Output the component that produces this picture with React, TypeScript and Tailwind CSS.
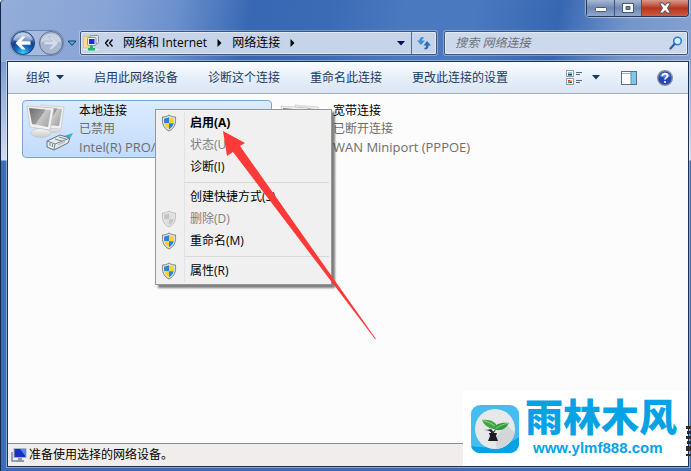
import type { ReactNode } from "react";

const commands = ["启用此网络设备", "诊断这个连接", "重命名此连接", "更改此连接的设置"];

type MenuEntry = {
  label: string;
  shield?: "color" | "gray";
  disabled?: boolean;
  bold?: boolean;
};

const menuGroups: MenuEntry[][] = [
  [
    { label: "启用(A)", shield: "color", bold: true },
    { label: "状态(U)", disabled: true },
    { label: "诊断(I)" },
  ],
  [
    { label: "创建快捷方式(S)" },
    { label: "删除(D)", shield: "gray", disabled: true },
    { label: "重命名(M)", shield: "color" },
  ],
  [{ label: "属性(R)", shield: "color" }],
];

function Shield({ gray }: { gray?: boolean }) {
  const blue = gray ? "#c4c4c4" : "#2b83d6";
  const yellow = gray ? "#dedede" : "#fbd32b";
  return (
    <svg width="16" height="18" viewBox="0 0 16 18" aria-hidden="true">
      <path
        d="M8 1C6 2.500 3.500 3 1.500 3C1 9 2 14 8 17C14 14 15 9 14.500 3C12.500 3 10 2.500 8 1Z"
        fill={gray ? "#e6e6e6" : "#dfe3e6"}
        stroke={gray ? "#bdbdbd" : "#7f8589"}
      />
      <path d="M8 3C6.500 4 5 4.400 3.200 4.500C3 6.500 3 8 3.400 9.200H8Z" fill={blue} />
      <path d="M8 3C9.500 4 11 4.400 12.800 4.500C13 6.500 13 8 12.600 9.200H8Z" fill={yellow} />
      <path d="M3.400 9.200C4 12 5.500 13.800 8 15.200V9.200Z" fill={yellow} />
      <path d="M12.600 9.200C12 12 10.500 13.800 8 15.200V9.200Z" fill={blue} />
    </svg>
  );
}

function NetworkPcIcon({ plug }: { plug?: boolean }) {
  return (
    <svg width="48" height="50" viewBox="0 0 48 50" className="overflow-visible" aria-hidden="true">
      <defs>
        <linearGradient id="screen" x1="0" y1="0.2" x2="1" y2="0.8">
          <stop offset="0" stopColor="#747474" />
          <stop offset="0.5" stopColor="#9b9b9b" />
          <stop offset="0.52" stopColor="#c9c9c9" />
          <stop offset="1" stopColor="#a2a2a2" />
        </linearGradient>
        <linearGradient id="stand" x1="0" y1="0" x2="0" y2="1">
          <stop offset="0" stopColor="#f4f4f4" />
          <stop offset="1" stopColor="#c9c9c9" />
        </linearGradient>
      </defs>
      <ellipse cx="31" cy="28" rx="8" ry="3" fill="url(#stand)" />
      <path d="M18 3L41 5L38 27L20 26Z" fill="#efefef" stroke="#bdbdbd" strokeWidth="0.6" />
      <path d="M20 5L39 7L36 24L22 23Z" fill="url(#screen)" />
      <path d="M15 25H23L22 30H15Z" fill="#cfcfcf" />
      <ellipse cx="18" cy="31" rx="10" ry="4.500" fill="url(#stand)" stroke="#c4c4c4" strokeWidth="0.6" />
      <path d="M4 4L31 6L27 28L7 25Z" fill="#f2f2f2" stroke="#b8b8b8" strokeWidth="0.6" />
      <path d="M6 6L28 8L25 25L9 22Z" fill="url(#screen)" />
      {plug && (
        <g>
          <path d="M38 35L50 31L48 35L42 38Z" fill="#35b2e0" />
          <path d="M24 39L37 33L47 36L45 41L31 48L24 45Z" fill="#e6ebf0" stroke="#68727a" />
          <path d="M24 39L32 42L47 36M32 42L31 48M27 41V44M29.500 42V45M32 37L39 39M36 35L43 37" fill="none" stroke="#7b858d" />
          <path d="M35 43L42 39.500" stroke="#b9c3cc" strokeWidth="1.500" />
        </g>
      )}
    </svg>
  );
}

function Connection(props: { name: string; state: string; device: string; selected?: boolean }) {
  return (
    <button
      type="button"
      className={`flex h-[58px] w-[250px] items-start gap-2 rounded-sm border pt-px text-left leading-[18px] ${
        props.selected
          ? "border-[#7da2ce] bg-linear-to-b from-[#dcebfd] to-[#c1dcfc]"
          : "border-transparent"
      }`}
    >
      <span className="shrink-0">
        <NetworkPcIcon plug={props.selected} />
      </span>
      <span className="min-w-0 whitespace-nowrap text-[#6d6d6d]">
        <span className="block text-black">{props.name}</span>
        <span className="block">{props.state}</span>
        <span className="block text-[13px]">{props.device}</span>
      </span>
    </button>
  );
}

function ContextMenu() {
  return (
    <ul
      role="menu"
      className="absolute top-[15px] left-[147px] w-[177px] border border-[#979797] bg-[#f0f0f0] p-0.5 shadow-[3px_3px_2px_rgba(0,0,0,0.5)]"
    >
      {menuGroups.map((group, index) => (
        <li key={group[0].label} role="none">
          {index > 0 && (
            <div className="flex h-2 items-center">
              <span className="h-2 w-[27px] border-r border-[#e2e3e3]" />
              <hr className="flex-1 border-[#d8d8d8]" />
            </div>
          )}
          <ul role="none">
            {group.map((entry) => (
              <li key={entry.label} role="none">
                <button
                  type="button"
                  role="menuitem"
                  disabled={entry.disabled}
                  className={`flex h-[22px] w-full items-center text-left ${
                    entry.disabled ? "text-[#808080]" : "text-black"
                  } ${entry.bold ? "font-bold" : ""}`}
                >
                  <span className="flex h-full w-[27px] items-center justify-center border-r border-[#e2e3e3] pr-1">
                    {entry.shield && <Shield gray={entry.shield === "gray"} />}
                  </span>
                  <span className="pl-[5px]">{entry.label}</span>
                </button>
              </li>
            ))}
          </ul>
        </li>
      ))}
    </ul>
  );
}

function CaptionButton(props: { label: string; className: string; children: ReactNode }) {
  return (
    <button
      type="button"
      aria-label={props.label}
      className={`flex h-4 items-center justify-center ${props.className}`}
    >
      {props.children}
    </button>
  );
}

function TitleBar() {
  return (
    <div className="flex h-[31px] justify-end">
      <div className="flex h-[17px] rounded-b border border-t-0 border-[#26395c] shadow-[0_0_1px_1px_rgba(255,255,255,0.45)]">
        <CaptionButton label="最小化" className="w-7 border-r border-[#3c5078] bg-linear-to-b from-[#a9b9d3] via-[#6e88b2] to-[#8ea8cd]">
          <svg width="14" height="8" viewBox="0 0 14 8" className="mt-1">
            <rect x="1.500" y="1.500" width="11" height="4" rx="1" fill="#fff" stroke="#4a5870" />
          </svg>
        </CaptionButton>
        <CaptionButton label="最大化" className="w-[27px] border-r border-[#3c5078] bg-linear-to-b from-[#a9b9d3] via-[#6e88b2] to-[#8ea8cd]">
          <svg width="14" height="12" viewBox="0 0 14 12">
            <path fillRule="evenodd" d="M1.500 1.500H12.500V10.500H1.500ZM5 4.500V7.500H9V4.500Z" fill="#fff" stroke="#4a5870" />
          </svg>
        </CaptionButton>
        <CaptionButton label="关闭" className="w-[46px] rounded-br bg-linear-to-b from-[#d79a8c] via-[#b5331f] to-[#cf5b40]">
          <svg width="14" height="12" viewBox="0 0 14 12">
            <path
              d="M1.500 1H5L7 3.500L9 1H12.500L9.500 6L12.500 11H9L7 8.500L5 11H1.500L4.500 6Z"
              fill="#fff"
              stroke="#53525c"
            />
          </svg>
        </CaptionButton>
      </div>
    </div>
  );
}

function NavButtons() {
  return (
    <div className="flex items-center">
      <div className="flex gap-1 rounded-full bg-white/20 shadow-[0_0_1px_1px_rgba(40,60,100,0.35)]">
        <button type="button" aria-label="后退">
          <svg width="24" height="24" viewBox="0 0 24 24" className="block">
            <defs>
              <radialGradient id="back" cx="0.5" cy="0.95" r="0.85">
                <stop offset="0" stopColor="#3fd4fb" />
                <stop offset="0.4" stopColor="#1268c0" />
                <stop offset="0.7" stopColor="#123f90" />
                <stop offset="1" stopColor="#9bb5dc" />
              </radialGradient>
            </defs>
            <circle cx="12" cy="12" r="11.500" fill="url(#back)" stroke="#20406f" />
            <path d="M2.500 9C5 0 19 0 21.500 9C16 11 8 11 2.500 9Z" fill="#fff" opacity="0.45" />
            <path d="M4.500 12L11 5.500H14.500L10.500 10.200H19.500V13.800H10.500L14.500 18.500H11Z" fill="#fff" />
          </svg>
        </button>
        <button type="button" aria-label="前进">
          <svg width="24" height="24" viewBox="0 0 24 24" className="block">
            <circle cx="12" cy="12" r="11.500" fill="#a9b7cf" stroke="#5c6f92" />
            <path d="M2 11C3 0 21 0 22 11Z" fill="#fff" opacity="0.4" />
            <path d="M19.500 12L13 5.500H9.500L13.500 10.200H5V13.800H13.500L9.500 18.500H13Z" fill="#d3dcea" stroke="#a3b0c8" strokeWidth="0.6" />
          </svg>
        </button>
      </div>
      <button type="button" aria-label="最近的页面" className="ml-1 flex w-2.5 justify-center">
        <svg width="10" height="7" viewBox="0 0 10 7">
          <path d="M1 1H9L5 5.500Z" fill="#3fb0dc" stroke="#1d3d70" />
        </svg>
      </button>
    </div>
  );
}

function CrumbArrow() {
  return (
    <svg width="5" height="8" viewBox="0 0 5 8" aria-hidden="true">
      <path d="M0.500 0V8L4.500 4Z" fill="#000" />
    </svg>
  );
}

function AddressBar() {
  return (
    <div className="flex h-6 flex-1 items-center rounded-xs border border-[#3f557e] bg-[#c6d4ea] shadow-[inset_0_0_0_1px_rgba(255,255,255,0.5),0_0_0_1px_rgba(255,255,255,0.3)]">
      <svg width="16" height="16" viewBox="0 0 16 16" className="ml-0.5 shrink-0" aria-hidden="true">
        <path d="M0.500 1.500H5L7 0.500V13H0.500Z" fill="#f6df84" stroke="#d6b95a" strokeWidth="0.7" />
        <rect x="7" y="0.500" width="8.500" height="8" rx="1" fill="#dfe3ec" stroke="#8994ab" />
        <rect x="4.500" y="2.500" width="8.500" height="8" rx="1" fill="#e9ecf4" stroke="#8994ab" />
        <rect x="6" y="4" width="5.500" height="5" fill="#1a2fd0" />
        <path d="M0 14.500H16" stroke="#dfe6e8" strokeWidth="2" />
        <path d="M7 11H10V13H12V15.500H5V13H7Z" fill="#21b573" />
      </svg>
      <nav aria-label="地址" className="flex flex-1 items-center gap-2.5 pl-1.5 whitespace-nowrap">
        <svg width="8" height="8" viewBox="0 0 8 8" aria-hidden="true">
          <path d="M3.500 0.500L0.500 4L3.500 7.500M7.500 0.500L4.500 4L7.500 7.500" fill="none" stroke="#000" strokeWidth="1.300" />
        </svg>
        <a href="#network">网络和 Internet</a>
        <CrumbArrow />
        <a href="#connections">网络连接</a>
        <CrumbArrow />
      </nav>
      <button type="button" aria-label="以前的位置" className="flex h-full w-5 items-center justify-center">
        <svg width="8" height="5" viewBox="0 0 8 5">
          <path d="M0 0H8L4 4.500Z" fill="#0a0a5c" />
        </svg>
      </button>
      <button
        type="button"
        aria-label="刷新"
        className="flex h-full w-[25px] items-center justify-center border-l border-[#566a90]"
      >
        <svg width="16" height="14" viewBox="0 0 16 14">
          <path d="M7 1C4.500 1 3.500 2 3.500 4.500H1L5 9L9 4.500H6C6 3 6.500 2.500 8 2Z" fill="#3b8fd2" />
          <path d="M9 13.500C11.500 13.500 12.500 12 12.500 9.500H15L11 5L7.500 9.500H10C10 11 9.500 12 8 12.500Z" fill="#2a6cb4" />
        </svg>
      </button>
    </div>
  );
}

function SearchBox() {
  return (
    <label className="ml-1 flex h-6 w-[36%] items-center rounded-xs border border-[#3f557e] bg-[#ccd9ed] pr-1 pl-2.5 shadow-[inset_0_0_0_1px_rgba(255,255,255,0.5),0_0_0_1px_rgba(255,255,255,0.3)]">
      <input
        type="search"
        aria-label="搜索 网络连接"
        placeholder="搜索 网络连接"
        className="min-w-0 flex-1 bg-transparent italic outline-none placeholder:text-[#6c7178]"
      />
      <svg width="14" height="14" viewBox="0 0 14 14" aria-hidden="true">
        <circle cx="8.500" cy="5" r="3.800" fill="#d9ecfa" stroke="#2d82cb" strokeWidth="1.600" />
        <path d="M5.500 8L1.500 12.500" stroke="#2e5fa8" strokeWidth="2.200" strokeLinecap="round" />
      </svg>
    </label>
  );
}

function Toolbar() {
  return (
    <div className="flex h-8 items-center border-b border-[#a0afc3] bg-linear-to-b from-[#fbfdff] via-[#e6effa] to-[#dbe6f4] pr-[15px] pl-[18px] whitespace-nowrap text-[#1e395b]">
      <button type="button" className="mr-[30px] flex items-center gap-1.5">
        组织
        <svg width="8" height="5" viewBox="0 0 8 5" aria-hidden="true">
          <path d="M0 0H8L4 4.500Z" fill="#1e395b" />
        </svg>
      </button>
      <div className="flex flex-1 gap-[30px]">
        {commands.map((command) => (
          <button key={command} type="button">
            {command}
          </button>
        ))}
      </div>
      <button type="button" aria-label="更改您的视图" className="flex items-center gap-2.5">
        <svg width="16" height="16" viewBox="0 0 16 16">
          <rect x="0.500" y="0.500" width="7" height="6" fill="#fff" stroke="#8b9bac" />
          <path d="M2 4H6V5.500H2Z" fill="#173a52" />
          <path d="M2 2H6V4H2Z" fill="#7cc7dd" />
          <rect x="0.500" y="8.500" width="7" height="6" fill="#fff" stroke="#8b9bac" />
          <path d="M2 10H4V11.500H2Z" fill="#d43b2a" />
          <path d="M4 10H6V11.500H4Z" fill="#e9b72d" />
          <path d="M2 11.500H4V13H2Z" fill="#2c9a45" />
          <path d="M4 11.500H6V13H4Z" fill="#2750c4" />
          <path d="M10 2.500H16M10 4.500H14M10 10.500H16M10 12.500H14" stroke="#526a83" />
        </svg>
        <svg width="8" height="5" viewBox="0 0 8 5">
          <path d="M0 0H8L4 4.500Z" fill="#1e395b" />
        </svg>
      </button>
      <button type="button" aria-label="显示预览窗格" className="ml-[21px]">
        <svg width="16" height="14" viewBox="0 0 16 14" className="block">
          <rect x="0.500" y="0.500" width="15" height="13" fill="#fff" stroke="#5a7087" />
          <path d="M1 2.500H10" stroke="#9fb0c2" />
          <rect x="10" y="1" width="5" height="12" fill="#7fc8e8" />
          <path d="M10 1V13" stroke="#5a8fae" />
        </svg>
      </button>
      <button type="button" aria-label="获取帮助" className="ml-5">
        <svg width="16" height="16" viewBox="0 0 16 16" className="block">
          <circle cx="8" cy="8" r="7.300" fill="#2347b5" stroke="#8a8f9c" strokeWidth="1.400" />
          <path d="M2.500 6C4 1.500 12 1.500 13.500 6C10 8 6 8 2.500 6Z" fill="#8fb0ee" opacity="0.6" />
          <path d="M5.500 6C5.500 3 10.500 3 10.500 6C10.500 7.500 8 7.800 8 9.500" fill="none" stroke="#fff" strokeWidth="1.800" />
          <circle cx="8" cy="12" r="1.100" fill="#fff" />
        </svg>
      </button>
    </div>
  );
}

function SiteBadge() {
  return (
    <div className="absolute right-0 bottom-0 flex h-[75px] w-[225px] items-center gap-1.5 bg-white pl-2">
      <svg width="48" height="48" viewBox="0 0 48 48" className="shrink-0" aria-hidden="true">
        <rect width="48" height="48" rx="9" fill="#45bdef" />
        <path d="M0 41Q28 46 48 32V39A9 9 0 0 1 39 48H9A9 9 0 0 1 0 41Z" fill="#05a3e4" />
        <circle cx="24" cy="24" r="20" fill="#e6e8ea" />
        <path d="M26 43.900A20 20 0 0 0 43.500 28L35 19L24 34Z" fill="#d3d5d7" />
        <path d="M11 15C19 14 26 17 27 24C20 25 13 21 11 15Z" fill="#43a545" />
        <path d="M12 15.500C18 17 22 19 26 23" fill="none" stroke="#a7dc9c" strokeWidth="0.800" />
        <path d="M38 18C29 17 23 20 23 24C29 27 35 24 38 18Z" fill="#2f9a3e" />
        <path d="M37 18.500C32 19 28 21 24 24" fill="none" stroke="#a7dc9c" strokeWidth="0.800" />
        <path d="M13 25Q20 25 20.500 29H23Q23 25 25 23L24 27Q21 26 20 24Q17 25 13 25Z" fill="#26282b" />
        <path d="M18 28H26L25 31L27 36H17L19 31Z" fill="#1b1d22" />
      </svg>
      <div className="flex flex-col gap-1.5 pb-1 whitespace-nowrap text-[#05a3e4]">
        <div className="text-[38px] leading-9 font-black">雨林木风</div>
        <div className="pl-2 font-['Liberation_Sans',sans-serif] text-[15px] leading-4 font-bold">www.ylmf888.com</div>
      </div>
    </div>
  );
}

export default function App() {
  return (
    <main className="relative flex min-h-screen flex-col overflow-hidden rounded-tl border-l border-[#14264a] pr-0.5 pb-1 pl-1.5 font-['Open_Sans','Noto_Sans_CJK_SC',sans-serif] text-[12px] text-black [background:linear-gradient(180deg,#7f9ccf_0,#d3ddee_98px,#3d6cb7_99px,#3d6cb7_100%)_0_62px/100%_100%_no-repeat,linear-gradient(100deg,#94add9_0%,#88a4d6_15%,#6c91cd_25%,#3868b3_36%,#3b6bb5_47%,#4b79c0_58%,#4b79c0_68%,#3767b2_80%,#7495cb_90%,#85a1d0_100%)_0_0/100%_62px_no-repeat,#3d6cb7]">
      <TitleBar />
      <div className="mb-1.5 flex h-6 items-center gap-[3px] pr-px pl-1">
        <NavButtons />
        <AddressBar />
        <SearchBox />
      </div>
      <div className="relative flex flex-1 flex-col border border-[#1d3156] bg-[#fcfcfc] shadow-[0_0_0_1px_rgba(255,255,255,0.4)]">
        <Toolbar />
        <section className="relative flex flex-1 gap-1 pt-1.5 pl-3.5">
          <Connection name="本地连接" state="已禁用" device="Intel(R) PRO/" selected />
          <Connection name="宽带连接" state="已断开连接" device="WAN Miniport (PPPOE)" />
          <ContextMenu />
        </section>
        <footer className="flex h-[23px] items-center gap-0.5 border-t border-[#8d8d8d] bg-[#f1edec] pl-[3px]">
          <svg width="16" height="16" viewBox="0 0 16 16" aria-hidden="true">
            <path d="M1 5V14H6" fill="none" stroke="#7b8494" strokeWidth="1.500" />
            <rect x="3" y="1.500" width="12" height="9" fill="#1730c4" stroke="#aab3c8" />
            <path d="M9 2H14.500V9Z" fill="#5d86ee" />
            <path d="M7 11H11V13H13V15H5V13H7Z" fill="#8f98a8" />
          </svg>
          <p>准备使用选择的网络设备。</p>
        </footer>
        <SiteBadge />
      </div>
      <svg
        className="pointer-events-none absolute right-0 bottom-[9px]"
        width="5"
        height="37"
        viewBox="0 0 5 37"
        aria-hidden="true"
      >
        <path
          d="M0 1H5V4H0ZM1 6H5V9H1ZM0 11H5V14H0ZM1 16H5V19H1ZM0 21H5V26H0ZM0 29H5V31H3V36H2V31H0Z"
          fill="#2b2b2d"
        />
      </svg>
      <svg
        className="pointer-events-none absolute top-[130px] left-[221px]"
        width="156"
        height="210"
        viewBox="222 130 156 210"
        aria-hidden="true"
      >
        <path d="M223 131L245 143L240 146L376 339L375 339L233 152L227 156Z" fill="#fd3a37" />
      </svg>
    </main>
  );
}
